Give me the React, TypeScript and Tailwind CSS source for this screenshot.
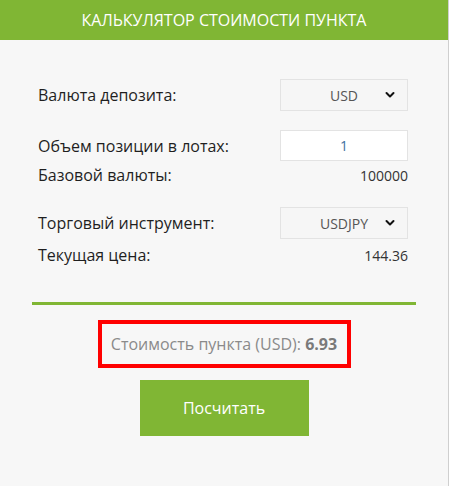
import { useState } from 'react';

function Chevron() {
  return (
    <svg width="10" height="7" viewBox="0 0 10 7" className="pointer-events-none absolute right-[12px] top-1/2 -translate-y-1/2">
      <polyline points="1.5,1.5 5,5 8.5,1.5" fill="none" stroke="#111" strokeWidth="2" strokeLinecap="round" strokeLinejoin="round" />
    </svg>
  );
}

function SelectBox({ value }: { value: string }) {
  return (
    <div className="relative flex h-[32px] w-[128px] items-center justify-center border border-[#e3e3e3] bg-[#f6f6f6] text-[14px] text-[#555]">
      {value}
      <Chevron />
    </div>
  );
}

export default function App() {
  const [lots] = useState('1');

  return (
    <div className="min-h-[486px] w-[449px] border-r border-[#cfcfcf] bg-[#f7f7f7] font-['Open_Sans',sans-serif]">
      <header className="flex h-[40px] items-center justify-center bg-[#80b634] text-[16px] text-white">
        КАЛЬКУЛЯТОР СТОИМОСТИ ПУНКТА
      </header>

      <section className="pl-[38px] pr-[40px] pt-[39px] text-[16px] text-[#1f1f1f]">
        <div className="flex items-center justify-between">
          <span>Валюта депозита:</span>
          <SelectBox value="USD" />
        </div>

        <div className="mt-[19px] flex items-center justify-between">
          <span>Объем позиции в лотах:</span>
          <div className="flex h-[31px] w-[128px] items-center justify-center border border-[#e3e3e3] bg-white text-[14px] text-[#3d6f9e]">
            {lots}
          </div>
        </div>
        <div className="mt-[2px] flex h-[24px] items-center justify-between">
          <span>Базовой валюты:</span>
          <span className="text-[14px] text-[#333]">100000</span>
        </div>

        <div className="mt-[20px] flex items-center justify-between">
          <span>Торговый инструмент:</span>
          <SelectBox value="USDJPY" />
        </div>
        <div className="mt-[4px] flex h-[24px] items-center justify-between">
          <span>Текущая цена:</span>
          <span className="text-[14px] text-[#333]">144.36</span>
        </div>
      </section>

      <div className="mx-[32px] mt-[35px] h-[3px] bg-[#80b634]" />

      <div className="mt-[15px] flex justify-center">
        <div className="flex h-[48px] w-[253px] items-center justify-center border-[4px] border-[#ff0000] text-[16px] text-[#8a8a8a]">
          Стоимость пункта (USD):&nbsp;<b className="font-bold text-[#7a7a7a]">6.93</b>
        </div>
      </div>

      <div className="mt-[12px] flex justify-center">
        <button className="h-[56px] w-[169px] bg-[#80b634] text-[16px] text-white">Посчитать</button>
      </div>
    </div>
  );
}
